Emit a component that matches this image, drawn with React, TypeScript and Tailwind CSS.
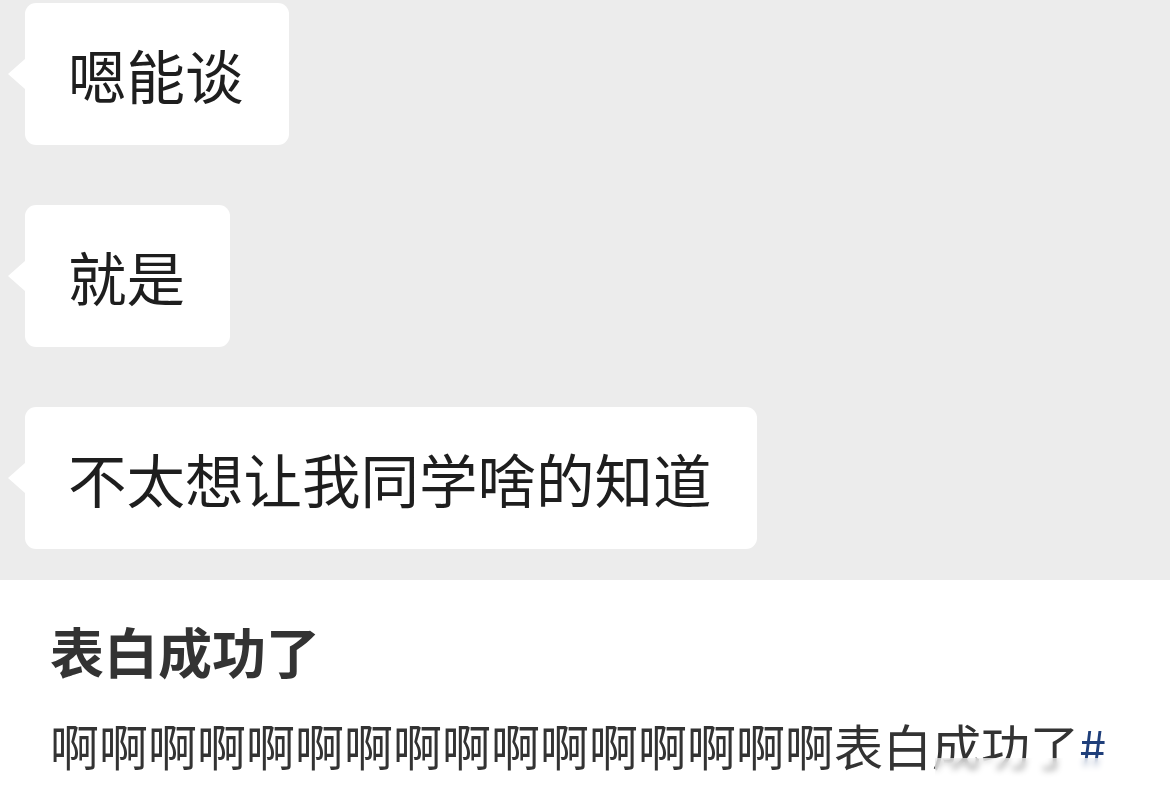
import React from "react";

const font = { fontFamily: '"Noto Sans CJK SC", "Noto Sans", sans-serif' };

function Bubble({ text }: { text: string }) {
  return (
    <div className="relative ml-[25px] self-start">
      <div className="absolute left-[-17px] top-[56px] h-0 w-0 border-y-[15px] border-r-[17px] border-y-transparent border-r-white" />
      <div className="flex h-[142px] items-center rounded-[11px] bg-white pl-[43px] pr-[45px] text-[58.5px] leading-none text-[#1e1e1e]">
        {text}
      </div>
    </div>
  );
}

export default function App() {
  return (
    <div className="h-[802px] w-[1170px] overflow-hidden bg-white" style={font}>
      <div className="flex h-[580px] flex-col gap-[60px] bg-[#ececec] pt-[3px]">
        <Bubble text="嗯能谈" />
        <Bubble text="就是" />
        <Bubble text="不太想让我同学啥的知道" />
      </div>
      <div className="relative px-[50px]">
        <div className="pt-[44px] text-[54px] font-bold leading-none text-[#333333]">表白成功了</div>
        <div className="mt-[42px] whitespace-nowrap text-[49px] leading-none text-[#333333]">
          啊啊啊啊啊啊啊啊啊啊啊啊啊啊啊啊表白成功了<span className="text-[#1f3f7a]">#</span>
        </div>
        <div className="absolute left-[935px] top-[178px] h-[38px] w-[230px] bg-white/60 backdrop-blur-[3px]" />
      </div>
    </div>
  );
}
